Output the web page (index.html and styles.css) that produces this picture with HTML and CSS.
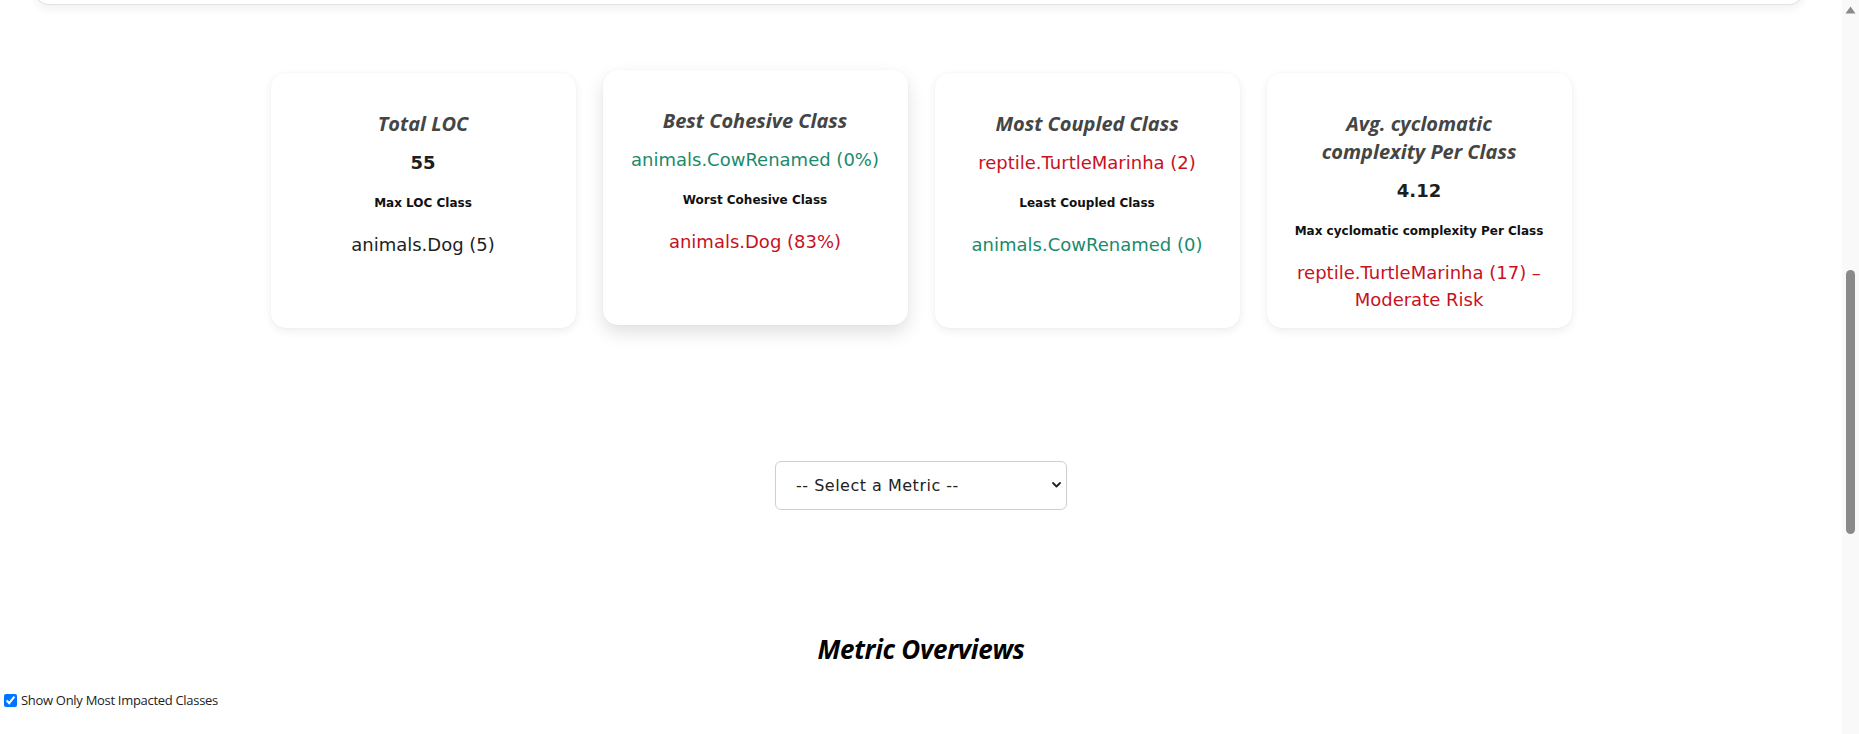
FILE: index.html
```html
<!DOCTYPE html>
<html lang="en">
<head>
<meta charset="utf-8">
<title>Metrics Dashboard</title>
<link rel="stylesheet" href="styles.css">
</head>
<body>
<div class="page">
  <div class="top-panel"></div>

  <section class="cards">
    <div class="card">
      <h3 class="card-title">Total LOC</h3>
      <p class="card-value">55</p>
      <p class="card-label">Max LOC Class</p>
      <p class="card-detail">animals.Dog (5)</p>
    </div>
    <div class="card card-raised">
      <h3 class="card-title">Best Cohesive Class</h3>
      <p class="card-value plain good">animals.CowRenamed (0%)</p>
      <p class="card-label">Worst Cohesive Class</p>
      <p class="card-detail bad">animals.Dog (83%)</p>
    </div>
    <div class="card">
      <h3 class="card-title">Most Coupled Class</h3>
      <p class="card-value plain bad">reptile.TurtleMarinha (2)</p>
      <p class="card-label">Least Coupled Class</p>
      <p class="card-detail good">animals.CowRenamed (0)</p>
    </div>
    <div class="card">
      <h3 class="card-title">Avg. cyclomatic complexity Per Class</h3>
      <p class="card-value">4.12</p>
      <p class="card-label">Max cyclomatic complexity Per Class</p>
      <p class="card-detail bad">reptile.TurtleMarinha (17) – Moderate Risk</p>
    </div>
  </section>

  <div class="picker">
    <div class="select-wrap">
      <select class="metric-select">
        <option>-- Select a Metric --</option>
      </select>
      <svg class="chevron" width="9" height="6" viewBox="0 0 9 6"><path d="M1 1 L4.5 4.5 L8 1" fill="none" stroke="#222" stroke-width="1.8" stroke-linecap="round" stroke-linejoin="round"/></svg>
    </div>
  </div>

  <h2 class="overview-title">Metric Overviews</h2>

  <label class="filter">
    <input type="checkbox" checked>
    <span>Show Only Most Impacted Classes</span>
  </label>
</div>

<div class="scrollbar">
  <svg class="scroll-up" width="11" height="8" viewBox="0 0 11 8"><path d="M5.5 0.5 L10.5 7.5 L0.5 7.5 Z" fill="#8a8a8a"/></svg>
  <div class="scroll-thumb"></div>
</div>
</body>
</html>
```

FILE: styles.css
```css
html, body {
  margin: 0;
  padding: 0;
  background: #ffffff;
}

html {
  overflow: hidden;
}

.page {
  width: calc(100% - 17px);
  font-family: "DejaVu Sans", sans-serif;
}

.top-panel {
  box-sizing: border-box;
  height: 45px;
  margin: -40px 39px 0 35px;
  background: #ffffff;
  border: 1px solid #e2e2e2;
  border-top: none;
  border-radius: 0 0 14px 14px;
  box-shadow: 0 4px 10px rgba(0, 0, 0, 0.06);
}

.cards {
  display: flex;
  justify-content: center;
  gap: 27px;
  margin-top: 68px;
}

.card {
  box-sizing: border-box;
  width: 305px;
  height: 255px;
  padding: 37px 24px 0;
  background: #ffffff;
  border-radius: 15px;
  box-shadow: 0 3px 10px rgba(0, 0, 0, 0.07), 0 0 2px rgba(0, 0, 0, 0.04);
  text-align: center;
}

.card-raised {
  transform: translateY(-3px);
  box-shadow: 0 8px 18px rgba(0, 0, 0, 0.12), 0 0 2px rgba(0, 0, 0, 0.05);
}

.card-title {
  margin: 0;
  padding: 0 12px;
  font-family: "Open Sans", sans-serif;
  font-style: italic;
  font-weight: 700;
  font-size: 20px;
  line-height: 28px;
  color: #454545;
}

.card-value {
  margin: 12px 0 0;
  font-size: 18px;
  line-height: 26px;
  font-weight: 700;
  color: #1e1e1e;
}

.card-value.plain {
  font-weight: 400;
}

.card-label {
  margin: 18px 0 0;
  font-size: 12px;
  line-height: 18px;
  font-weight: 700;
  color: #111111;
}

.card-detail {
  margin: 19px 0 0;
  font-size: 18px;
  line-height: 27px;
  color: #1e1e1e;
}

.good {
  color: #1b8a6b;
}

.bad {
  color: #c8101e;
}

.picker {
  display: flex;
  justify-content: center;
  margin-top: 133px;
}

.select-wrap {
  position: relative;
}

.metric-select {
  appearance: none;
  -webkit-appearance: none;
  box-sizing: border-box;
  display: block;
  width: 292px;
  height: 49px;
  padding: 0 20px;
  background: #ffffff;
  border: 1px solid #cfcfcf;
  border-radius: 6px;
  font-family: "DejaVu Sans", sans-serif;
  font-size: 16px;
  letter-spacing: 0.5px;
  color: #222222;
}

.chevron {
  position: absolute;
  right: 6px;
  top: 21px;
}

.overview-title {
  margin: 123px 0 0;
  text-align: center;
  font-family: "Open Sans", sans-serif;
  font-style: italic;
  font-weight: 700;
  font-size: 26px;
  line-height: 32px;
  letter-spacing: -0.3px;
  color: #000000;
}

.filter {
  display: flex;
  align-items: center;
  margin-top: 26px;
  font-family: "Open Sans", sans-serif;
  font-size: 13px;
  line-height: 18px;
  letter-spacing: -0.3px;
  color: #222222;
}

.filter input {
  width: 13px;
  height: 13px;
  margin: 0 4px;
}

.scrollbar {
  position: fixed;
  top: 0;
  right: 0;
  bottom: 0;
  width: 17px;
  background: #f9f9f9;
}

.scroll-up {
  position: absolute;
  top: 6px;
  left: 3px;
}

.scroll-thumb {
  position: absolute;
  top: 270px;
  left: 4px;
  width: 9px;
  height: 264px;
  border-radius: 5px;
  background: #8a8a8a;
}
```
